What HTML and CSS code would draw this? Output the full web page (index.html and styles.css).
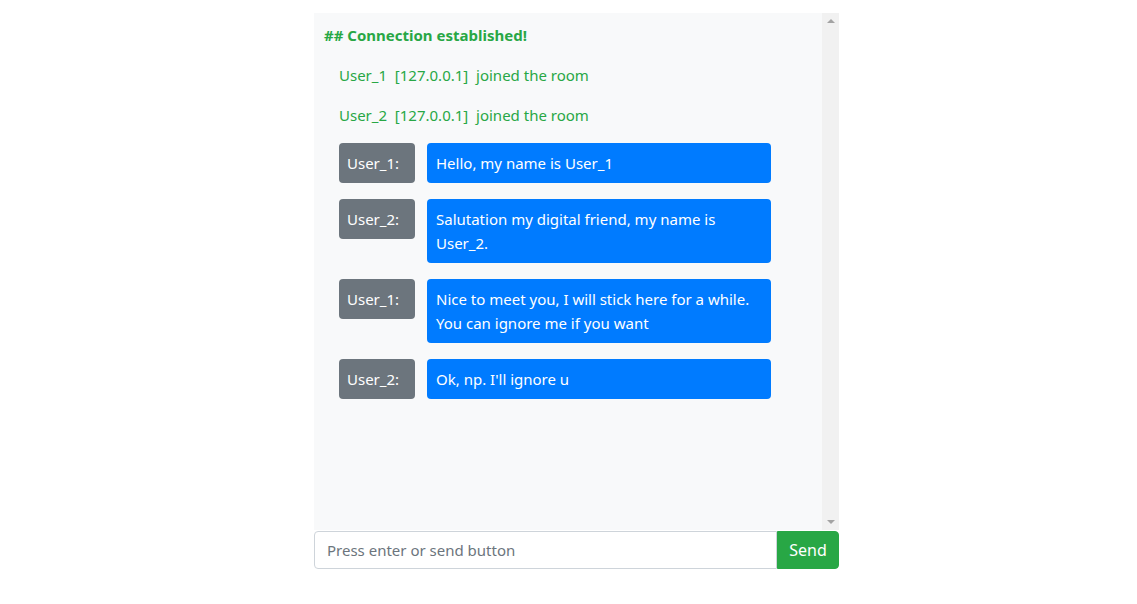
FILE: index.html
```html
<!DOCTYPE html>
<html>
<head>
<meta charset="utf-8">
<link rel="stylesheet" href="styles.css">
</head>
<body>
<div class="chat">
  <div class="panel">
    <div class="log">
      <div class="heading">## Connection established!</div>
      <div class="join">User_1&nbsp; [127.0.0.1]&nbsp; joined the room</div>
      <div class="join">User_2&nbsp; [127.0.0.1]&nbsp; joined the room</div>
      <div class="msg"><div class="who">User_1:</div><div class="text">Hello, my name is User_1</div></div>
      <div class="msg"><div class="who">User_2:</div><div class="text">Salutation my digital friend, my name is User_2.</div></div>
      <div class="msg"><div class="who">User_1:</div><div class="text">Nice to meet you, I will stick here for a while. You can ignore me if you want</div></div>
      <div class="msg"><div class="who">User_2:</div><div class="text">Ok, np. I'll ignore u</div></div>
    </div>
    <div class="scrollbar">
      <span class="arrow up"></span>
      <span class="arrow down"></span>
    </div>
  </div>
  <div class="inputrow">
    <input class="field" type="text" placeholder="Press enter or send button">
    <button class="send">Send</button>
  </div>
</div>
</body>
</html>
```
FILE: styles.css
```css
* { box-sizing: border-box; }
html, body { margin: 0; padding: 0; background: #fff; }
body {
  font-family: "Noto Sans", "Open Sans", sans-serif;
  font-size: 16px;
  line-height: 24px;
  color: #212529;
  padding: 13px 0 0 16px;
}
.chat {
  width: 525px;
  margin: 0 auto;
}
.panel {
  display: flex;
  height: 517px;
  background: #f8f9fa;
}
.log {
  flex: 1;
  padding: 10px 10px;
  display: flex;
  flex-direction: column;
  gap: 16px;
}
.heading {
  color: #28a745;
  font-weight: 700;
  font-size: 15px;
}
.join {
  color: #28a745;
  padding-left: 15px;
  font-size: 15px;
}
.msg {
  display: flex;
  gap: 12px;
  padding-left: 15px;
  align-items: flex-start;
}
.who {
  width: 76px;
  flex: none;
  background: #6c757d;
  color: #fff;
  border-radius: 4px;
  padding: 8px 8px;
  font-size: 15px;
}
.text {
  width: 344px;
  flex: none;
  background: #007bff;
  color: #fff;
  border-radius: 4px;
  padding: 8px 9px;
  font-size: 15px;
}
.scrollbar {
  width: 17px;
  flex: none;
  background: #f1f1f1;
  display: flex;
  flex-direction: column;
  justify-content: space-between;
  align-items: center;
  padding: 6px 0;
}
.arrow {
  width: 0;
  height: 0;
  border-left: 4px solid transparent;
  border-right: 4px solid transparent;
}
.arrow.up { border-bottom: 4px solid #a3a3a3; }
.arrow.down { border-top: 4px solid #a3a3a3; }
.inputrow {
  display: flex;
  margin-top: 1px;
  height: 38px;
}
.field {
  flex: 1;
  min-width: 0;
  border: 1px solid #ced4da;
  border-radius: 4px 0 0 4px;
  padding: 0 12px;
  font-family: inherit;
  font-size: 15px;
  color: #495057;
  background: #fff;
  outline: none;
}
.field::placeholder { color: #6c757d; }
.send {
  width: 62px;
  flex: none;
  border: 1px solid #28a745;
  background: #28a745;
  color: #fff;
  border-radius: 0 4px 4px 0;
  font-family: inherit;
  font-size: 16px;
  padding: 0;
}
```
